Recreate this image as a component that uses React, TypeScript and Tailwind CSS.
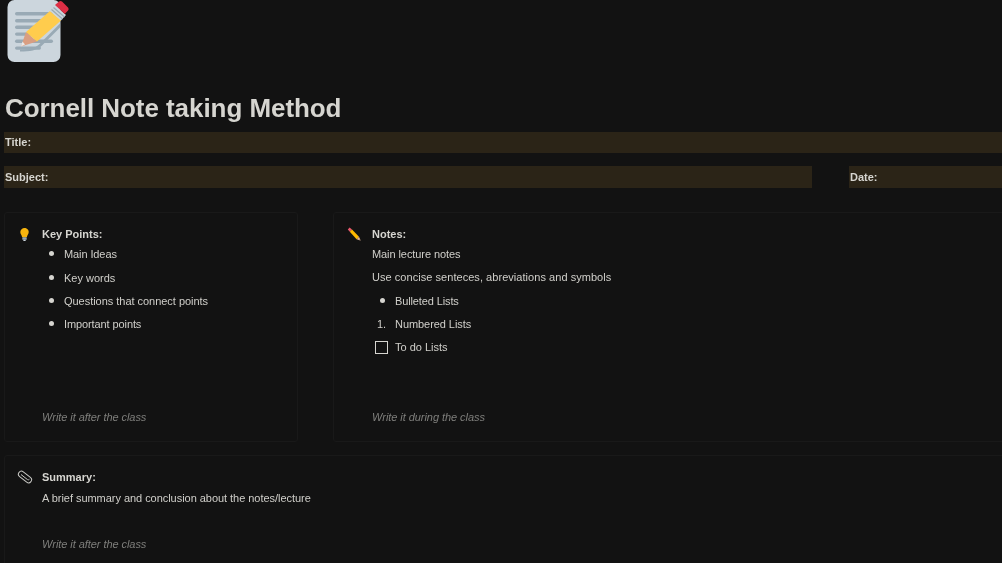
const KEY_POINTS = [
  { label: "Main Ideas", className: "tracking-[-0.1px]" },
  { label: "Key words", className: "" },
  { label: "Questions that connect points", className: "tracking-[-0.03px]" },
  { label: "Important points", className: "tracking-[-0.1px]" },
];

const MemoIcon = () => (
  <svg viewBox="0 0 70 64" className="block w-[70px] h-[64px] shrink-0">
    <rect x="7.5" y="0" width="53" height="62" rx="7" fill="#CCD6DD" />
    <g fill="#99AAB5">
      <rect x="15" y="12" width="38" height="3.4" rx="1.7" />
      <rect x="15" y="19" width="30" height="3.4" rx="1.7" />
      <rect x="15" y="25.6" width="24" height="3.4" rx="1.7" />
      <rect x="15" y="32.4" width="18" height="3.4" rx="1.7" />
      <rect x="15" y="39.6" width="38" height="3.4" rx="1.7" />
      <rect x="15" y="46.4" width="26" height="3.4" rx="1.7" />
      <path d="M20 49.5c8 0 15-1 19-5l21-21 0 4-18 18c-5 5-12 6-22 6z" />
    </g>
    <path d="M26 32 37 41.500 21 46.500z" fill="#D99E82" />
    <path d="M22.500 41.500 25 44.500 21 46.500z" fill="#E8E8E8" />
    <path d="M26 32 50 11 61 20.500 37 41.500z" fill="#FFCC4D" />
    <path d="M50 11 55 5 66 15 61 20.500z" fill="#CCD6DD" />
    <path d="M51.500 9.500 62.500 19M53.500 7.500 64.500 17" stroke="#99AAB5" strokeWidth="1.200" />
    <path d="M55 5 59 1.500c1-.8 2-.8 3 0l6 6c.8.900.8 2 0 3L64.800 14z" fill="#DD2E44" />
  </svg>
);

const BulbIcon = () => (
  <svg viewBox=".5 -.5 14 14" className="block w-[14px] h-[14px] shrink-0">
    <path d="M7 .5C4.800.5 2.800 2.200 2.800 4.600c0 2.100 1.500 3 1.800 5.200h4.800c.3-2.200 1.800-3.100 1.800-5.200C11.400 2.200 9.200.5 7 .5z" fill="#F6B40E" />
    <rect x="4.800" y="9.800" width="4.400" height="2.500" rx=".6" fill="#99AAB5" />
    <rect x="5.800" y="12.300" width="2.400" height="1.200" rx=".5" fill="#CCD6DD" />
  </svg>
);

const PencilIcon = () => (
  <svg viewBox="0 0 14 14" className="block w-[14px] h-[14px] shrink-0">
    <path d="M.8 2.400 2.600.6 5 2.600 2.800 4.800z" fill="#EA596E" />
    <path d="M5 2.600 12 9.800 9.600 12.200 2.800 4.800z" fill="#FFB900" />
    <path d="M12 9.800 13.800 13.800 9.600 12.200z" fill="#E8B48C" />
    <path d="M13 12.200 13.800 13.800 12.200 13.200z" fill="#333" />
  </svg>
);

const ClipIcon = () => (
  <svg viewBox="0 0 16 14" className="block w-[16px] h-[14px] shrink-0" fill="none" stroke="#C9C9C5" strokeWidth="1">
    <rect x="0.500" y="4" width="15" height="6" rx="3" transform="rotate(38 8 7)" />
    <path d="M4.600 4.300 11 9.300c.6.500 1.500.4 2-.2" transform="translate(-.6 .2)" />
  </svg>
);

const FieldLabel = ({ children }: { children: string }) => (
  <span className="pl-px text-[11px] leading-[14px] font-bold text-[#d6d5d0]">{children}</span>
);

const Hint = ({ children }: { children: string }) => (
  <p className="text-[11px] leading-[14px] italic tracking-[-0.06px] text-[#7f7f7c]">{children}</p>
);

export default function App() {
  return (
    <div className="w-[1002px] h-[563px] overflow-hidden bg-[#121212]">
      <div className="h-full [will-change:opacity] font-['Liberation_Sans',Arial,sans-serif] text-[#d0cfca] [text-rendering:optimizeLegibility]">
        <MemoIcon />
        <h1 className="mt-[29px] pl-[5px] text-[26px] leading-[30px] font-bold tracking-[-0.06px] text-[#d6d5d0]">
          Cornell Note taking Method
        </h1>

        <div className="mt-[9px] ml-[4px] h-[21px] flex items-center bg-[#2b2417] pb-px">
          <FieldLabel>Title:</FieldLabel>
        </div>

        <div className="mt-[13px] ml-[4px] flex justify-between">
          <div className="w-[808px] h-[22px] flex items-center bg-[#2b2417]">
            <FieldLabel>Subject:</FieldLabel>
          </div>
          <div className="w-[153px] h-[22px] flex items-center bg-[#2b2417]">
            <FieldLabel>Date:</FieldLabel>
          </div>
        </div>

        <div className="mt-[24px] ml-[4px] flex gap-[35px]">
          {/* Key points */}
          <div className="w-[294px] h-[230px] shrink-0 flex flex-col rounded-[3px] border border-[#191919] pt-[14px] pb-[17px] pl-[13px]">
            <div className="flex items-center">
              <BulbIcon />
              <span className="ml-[10px] text-[11px] leading-[14px] font-bold text-[#d6d5d0]">Key Points:</span>
            </div>
            <ul className="ml-[24px] mt-[6px] flex flex-col gap-[9px] flex-1">
              {KEY_POINTS.map((point) => (
                <li key={point.label} className="first:mb-px flex items-center text-[11px] leading-[14px]">
                  <span className="ml-[7px] mr-[10px] w-[5px] h-[5px] rounded-full bg-[#d6d5d0] -translate-y-px" />
                  <span className={point.className}>{point.label}</span>
                </li>
              ))}
            </ul>
            <div className="ml-[24px]">
              <Hint>Write it after the class</Hint>
            </div>
          </div>

          {/* Notes */}
          <div className="w-[700px] h-[230px] shrink-0 flex flex-col rounded-[3px] border border-[#191919] pt-[14px] pb-[17px] pl-[13px]">
            <div className="flex items-center">
              <PencilIcon />
              <span className="ml-[11px] text-[11px] leading-[14px] font-bold text-[#d6d5d0]">Notes:</span>
            </div>
            <div className="ml-[25px] mt-[-1px] flex flex-col flex-1 text-[11px] leading-[14px]">
              <p className="mt-[7px] tracking-[-0.08px]">Main lecture notes</p>
              <p className="mt-[9px] tracking-[0.045px]">Use concise senteces, abreviations and symbols</p>
              <div className="mt-[10px] flex items-center">
                <span className="ml-[8px] mr-[10px] w-[5px] h-[5px] rounded-full bg-[#d6d5d0] -translate-y-px" />
                <span className="tracking-[-0.12px]">Bulleted Lists</span>
              </div>
              <div className="mt-[9px] flex items-center">
                <span className="ml-[5px] w-[18px]">1.</span>
                <span className="tracking-[-0.06px]">Numbered Lists</span>
              </div>
              <div className="mt-[9px] flex items-center">
                <span className="ml-[3px] mr-[7px] w-[13px] h-[13px] border border-[#d6d5d0]" />
                To do Lists
              </div>
              <div className="mt-auto">
                <Hint>Write it during the class</Hint>
              </div>
            </div>
          </div>
        </div>

        {/* Summary */}
        <div className="mt-[13px] ml-[4px] w-[1010px] h-[130px] rounded-[3px] border border-[#191919] pt-[14px] pl-[12px]">
          <div className="flex items-center">
            <ClipIcon />
            <span className="ml-[9px] text-[11px] leading-[14px] font-bold text-[#d6d5d0]">Summary:</span>
          </div>
          <div className="ml-[25px]">
            <p className="mt-[7px] text-[11px] leading-[14px] tracking-[-0.04px]">A brief summary and conclusion about the notes/lecture</p>
            <div className="mt-[32px]">
              <Hint>Write it after the class</Hint>
            </div>
          </div>
        </div>
      </div>
    </div>
  );
}
